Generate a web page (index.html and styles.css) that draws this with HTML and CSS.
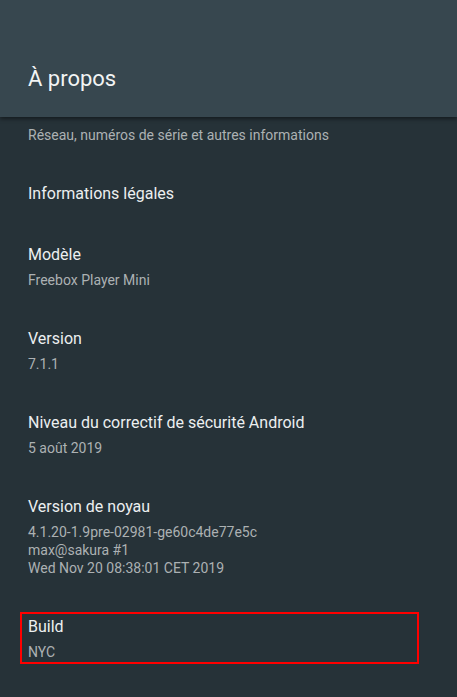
FILE: index.html
```html
<!DOCTYPE html>
<html lang="fr">
<head>
<meta charset="utf-8">
<title>À propos</title>
<link rel="stylesheet" href="styles.css">
</head>
<body>
<header class="appbar">
  <h1 class="appbar-title">À propos</h1>
</header>
<main class="list">
  <div class="item item-first">
    <div class="item-summary">Réseau, numéros de série et autres informations</div>
  </div>
  <div class="item">
    <div class="item-title">Informations légales</div>
  </div>
  <div class="item">
    <div class="item-title">Modèle</div>
    <div class="item-summary">Freebox Player Mini</div>
  </div>
  <div class="item">
    <div class="item-title">Version</div>
    <div class="item-summary">7.1.1</div>
  </div>
  <div class="item">
    <div class="item-title">Niveau du correctif de sécurité Android</div>
    <div class="item-summary">5 août 2019</div>
  </div>
  <div class="item">
    <div class="item-title">Version de noyau</div>
    <div class="item-summary">4.1.20-1.9pre-02981-ge60c4de77e5c<br>max@sakura #1<br>Wed Nov 20 08:38:01 CET 2019</div>
  </div>
  <div class="item item-highlight">
    <div class="item-title">Build</div>
    <div class="item-summary">NYC</div>
  </div>
</main>
</body>
</html>
```
FILE: styles.css
```css
html, body {
  margin: 0;
  padding: 0;
}
body {
  width: 457px;
  height: 697px;
  overflow: hidden;
  background: #263238;
  font-family: Roboto, "Noto Sans", sans-serif;
}
.appbar {
  height: 117px;
  background: #37474f;
  box-shadow: 0 2px 4px rgba(0, 0, 0, 0.45);
  position: relative;
  z-index: 1;
  display: flex;
  align-items: flex-end;
  padding: 0 28px 24px;
  box-sizing: border-box;
}
.appbar-title {
  margin: 0;
  font-size: 22px;
  font-weight: 400;
  line-height: 28px;
  color: #f2f4f4;
}
.list {
  display: flex;
  flex-direction: column;
  gap: 39px;
  padding-top: 9px;
}
.item {
  padding: 0 28px;
}
.item-title {
  font-size: 16px;
  line-height: 22px;
  color: #eceff0;
}
.item-summary {
  font-size: 14px;
  line-height: 18px;
  color: #acb1b3;
}
.item-title + .item-summary {
  margin-top: 5px;
}
.item-highlight {
  margin-left: 20px;
  width: 399px;
  box-sizing: border-box;
  border: 2px solid #ff0000;
  padding: 2px 6px 1px;
  margin-top: -4px;
}
```
